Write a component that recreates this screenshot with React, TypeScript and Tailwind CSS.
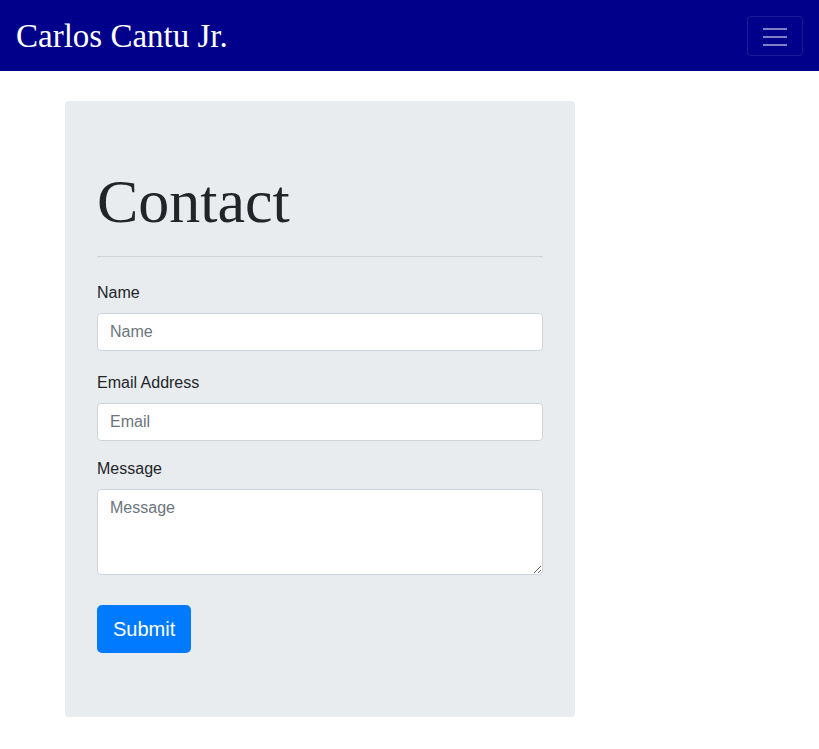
import React from "react";

export default function App() {
  const sans = "font-['Liberation_Sans',Arial,sans-serif]";
  const inputCls =
    "block w-full h-[38px] px-3 bg-white border border-[#ced4da] rounded-[4px] text-[16px] text-[#495057] placeholder:text-[#6c757d] outline-none " +
    sans;
  return (
    <div className={"min-h-[749px] bg-white " + sans}>
      <nav className="h-[71px] bg-[#00008b] flex items-center justify-between pl-4 pr-4">
        <a className="font-['Liberation_Serif','Times_New_Roman',serif] text-[33px] leading-[40px] text-white">
          Carlos Cantu Jr.
        </a>
        <button className="w-[56px] h-[40px] border border-[rgba(255,255,255,0.1)] rounded-[4px] flex items-center justify-center">
          <svg width="24" height="20" viewBox="0 0 24 20">
            <path
              d="M0 3h24M0 11h24M0 19h24"
              stroke="rgba(255,255,255,0.5)"
              strokeWidth="2"
            />
          </svg>
        </button>
      </nav>
      <div className="pt-[30px] pl-[65px]">
        <div className="w-[510px] bg-[#e9ecef] rounded-[4px] px-8 pt-[63px] pb-[64px]">
          <h1 className="font-['Liberation_Serif','Times_New_Roman',serif] text-[62px] leading-[74px] text-[#212529]">
            Contact
          </h1>
          <hr className="mt-[18px] mb-[24px] border-0 border-t border-[rgba(0,0,0,0.1)]" />
          <form onSubmit={(e) => e.preventDefault()}>
            <div className="mb-[20px]">
              <label className="block text-[16px] leading-[24px] text-[#212529] mb-2">Name</label>
              <input className={inputCls} placeholder="Name" />
            </div>
            <div className="mb-[16px]">
              <label className="block text-[16px] leading-[24px] text-[#212529] mb-2">Email Address</label>
              <input className={inputCls} placeholder="Email" />
            </div>
            <div>
              <label className="block text-[16px] leading-[24px] text-[#212529] mb-2">Message</label>
              <textarea
                rows={3}
                className={
                  "block w-full h-[86px] px-3 py-[6px] leading-[24px] bg-white border border-[#ced4da] rounded-[4px] text-[16px] text-[#495057] placeholder:text-[#6c757d] outline-none " +
                  sans
                }
                placeholder="Message"
              />
            </div>
            <button
              type="submit"
              className="mt-[30px] h-[48px] px-4 bg-[#007bff] text-white text-[20px] leading-[30px] rounded-[5px]"
            >
              Submit
            </button>
          </form>
        </div>
      </div>
    </div>
  );
}
